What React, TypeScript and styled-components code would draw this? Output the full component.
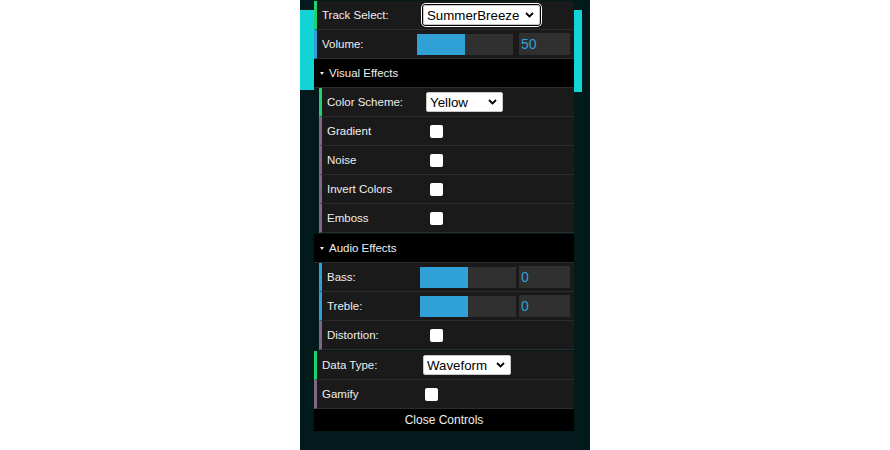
import React from 'react';
import styled, { createGlobalStyle } from 'styled-components';

const GlobalStyle = createGlobalStyle`
  html, body {
    margin: 0;
    padding: 0;
    background: #fff;
  }
`;

const Stage = styled.div`
  display: flex;
  justify-content: center;
  width: 890px;
  height: 450px;
`;

const Visualizer = styled.div`
  position: relative;
  width: 290px;
  height: 450px;
  background: #021a1b;
  padding: 1px 16px 0 14px;
  box-sizing: border-box;
`;

const Wave = styled.div<{ $left: number; $top: number; $w: number; $h: number }>`
  position: absolute;
  left: ${p => p.$left}px;
  top: ${p => p.$top}px;
  width: ${p => p.$w}px;
  height: ${p => p.$h}px;
  background: #12d3d6;
`;

const Panel = styled.div`
  position: relative;
  width: 260px;
  font-family: 'Liberation Sans', Arial, sans-serif;
  font-size: 11.5px;
  color: #eee;
`;

const Row = styled.div<{ $accent: string }>`
  display: flex;
  align-items: center;
  height: 28px;
  padding: 0 4px 0 5px;
  border-left: 3px solid ${p => p.$accent};
  border-bottom: 1px solid #2c2c2c;
  background: #1a1a1a;
`;

const Label = styled.span`
  width: 99px;
  flex: none;
  white-space: nowrap;
`;

const Folder = styled.div`
  display: flex;
  flex-direction: column;
  padding-bottom: 1px;
`;

const FolderTitle = styled.div`
  display: flex;
  align-items: center;
  gap: 4px;
  height: 28px;
  padding-left: 6px;
  background: #000;
  border-bottom: 1px solid #2c2c2c;
`;

const Arrow = styled.span`
  width: 0;
  height: 0;
  border-left: 2.5px solid transparent;
  border-right: 2.5px solid transparent;
  border-top: 3px solid #eee;
  margin-right: 1px;
`;

const Nested = styled.div`
  display: flex;
  flex-direction: column;
  padding-left: 5px;
`;

const SelectWrap = styled.div<{ $width: number; $focus?: boolean; $offset?: number }>`
  position: relative;
  width: ${p => p.$width}px;
  height: 20px;
  margin-left: ${p => p.$offset ?? 0}px;
  border-radius: ${p => (p.$focus ? '3px' : '0')};
  box-shadow: ${p => (p.$focus ? '0 0 0 1px #000, 0 0 0 2px #fff' : 'none')};
`;

const Select = styled.select`
  appearance: none;
  width: 100%;
  height: 100%;
  margin: 0;
  padding: 0 0 0 3px;
  border: 1px solid #c8c8c8;
  border-radius: 2px;
  background: #fff;
  color: #000;
  font-family: 'Liberation Sans', Arial, sans-serif;
  font-size: 13.3px;
  outline: none;
`;

const Chevron = styled.svg`
  position: absolute;
  right: 6px;
  top: 7px;
  pointer-events: none;
`;

const Slider = styled.div<{ $offset: number }>`
  position: relative;
  width: 96px;
  height: 21px;
  margin-left: ${p => p.$offset}px;
  background: #303030;
`;

const SliderFill = styled.div`
  height: 100%;
  background: #2fa1d6;
`;

const NumberBox = styled.input`
  width: 51px;
  height: 22px;
  margin: 0 0 0 auto;
  padding: 0 0 0 2px;
  box-sizing: border-box;
  border: 0;
  background: #303030;
  color: #2fa1d6;
  font-family: 'Liberation Sans', Arial, sans-serif;
  font-size: 14px;
  outline: none;
`;

const Check = styled.input`
  appearance: none;
  width: 13px;
  height: 13px;
  margin: 0 0 0 4px;
  border-radius: 2px;
  background: #fff;
`;

const CloseButton = styled.div`
  height: 22px;
  line-height: 22px;
  text-align: center;
  background: #000;
  font-size: 12px;
`;

const GREEN = '#1ed36f';
const BLUE = '#2fa1d6';
const MAUVE = '#806787';

type SelectRowProps = { label: string; value: string; options: string[]; width: number; focus?: boolean; offset?: number };

const SelectRow = ({ label, value, options, width, focus, offset }: SelectRowProps) => (
  <Row $accent={GREEN}>
    <Label>{label}</Label>
    <SelectWrap $width={width} $focus={focus} $offset={offset}>
      <Select defaultValue={value}>
        {options.map(o => (
          <option key={o}>{o}</option>
        ))}
      </Select>
      <Chevron width="9" height="6" viewBox="0 0 9 6">
        <path d="M1 1l3.5 3.5L8 1" fill="none" stroke="#000" strokeWidth="1.8" />
      </Chevron>
    </SelectWrap>
  </Row>
);

const SliderRow = ({ label, value, pct, offset }: { label: string; value: string; pct: number; offset: number }) => (
  <Row $accent={BLUE}>
    <Label>{label}</Label>
    <Slider $offset={offset}>
      <SliderFill style={{ width: `${pct}%` }} />
    </Slider>
    <NumberBox defaultValue={value} />
  </Row>
);

const CheckRow = ({ label }: { label: string }) => (
  <Row $accent={MAUVE}>
    <Label>{label}</Label>
    <Check type="checkbox" />
  </Row>
);

const App = () => {
  return (
    <Stage>
      <GlobalStyle />
      <Visualizer>
        <Wave $left={0} $top={10} $w={14} $h={80} />
        <Wave $left={274} $top={10} $w={8} $h={82} />
        <Panel>
          <SelectRow
            label="Track Select:"
            value="SummerBreeze"
            options={['SummerBreeze', 'NightDrive', 'Sunrise']}
            width={117}
            focus
            offset={2}
          />
          <SliderRow label="Volume:" value="50" pct={50} offset={-4} />
          <Folder>
            <FolderTitle>
              <Arrow />
              Visual Effects
            </FolderTitle>
            <Nested>
              <SelectRow label="Color Scheme:" value="Yellow" options={['Yellow', 'Blue', 'Red']} width={77} />
              <CheckRow label="Gradient" />
              <CheckRow label="Noise" />
              <CheckRow label="Invert Colors" />
              <CheckRow label="Emboss" />
            </Nested>
          </Folder>
          <Folder>
            <FolderTitle>
              <Arrow />
              Audio Effects
            </FolderTitle>
            <Nested>
              <SliderRow label="Bass:" value="0" pct={50} offset={-6} />
              <SliderRow label="Treble:" value="0" pct={50} offset={-6} />
              <CheckRow label="Distortion:" />
            </Nested>
          </Folder>
          <SelectRow
            label="Data Type:"
            value="Waveform"
            options={['Waveform', 'Frequency']}
            width={88}
            offset={2}
          />
          <CheckRow label="Gamify" />
          <CloseButton>Close Controls</CloseButton>
        </Panel>
      </Visualizer>
    </Stage>
  );
};

export default App;
